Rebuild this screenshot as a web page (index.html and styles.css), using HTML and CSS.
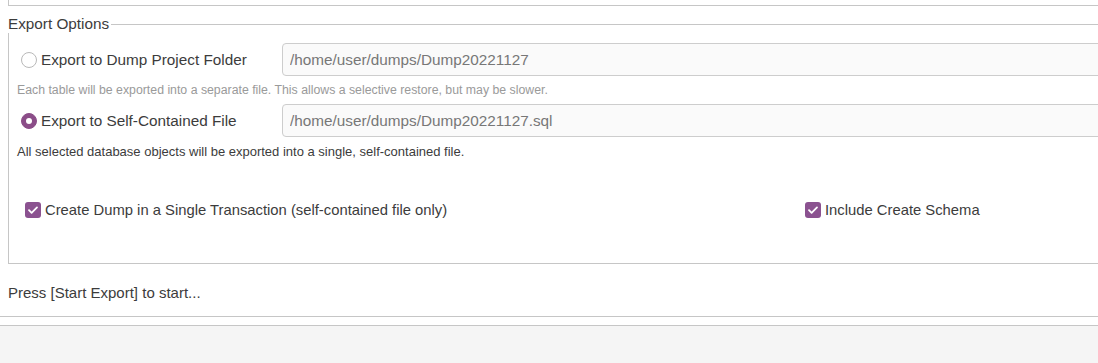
FILE: index.html
```html
<!DOCTYPE html>
<html lang="en">
<head>
    <meta charset="UTF-8">
    <title>Export Options</title>
    <link rel="stylesheet" href="styles.css">
</head>
<body>
    <div class="page">
        <div class="top-box"></div>

        <div class="frame-head">
            <span class="frame-title">Export Options</span>
            <span class="frame-rule"></span>
        </div>
        <div class="frame-body">
            <div class="option-row">
                <label class="radio"><span class="radio-dot"></span>Export to Dump Project Folder</label>
                <input class="path" type="text" value="/home/user/dumps/Dump20221127">
            </div>
            <p class="hint muted">Each table will be exported into a separate file. This allows a selective restore, but may be slower.</p>
            <div class="option-row">
                <label class="radio"><span class="radio-dot checked"></span>Export to Self-Contained File</label>
                <input class="path" type="text" value="/home/user/dumps/Dump20221127.sql">
            </div>
            <p class="hint wide">All selected database objects will be exported into a single, self-contained file.</p>

            <div class="check-row">
                <label class="check first"><span class="box"><svg viewBox="0 0 16 16" width="16" height="16"><path d="M4 8.2l2.6 2.6L12 5.4" fill="none" stroke="#fff" stroke-width="1.8" stroke-linecap="round" stroke-linejoin="round"/></svg></span>Create Dump in a Single Transaction (self-contained file only)</label>
                <label class="check"><span class="box"><svg viewBox="0 0 16 16" width="16" height="16"><path d="M4 8.2l2.6 2.6L12 5.4" fill="none" stroke="#fff" stroke-width="1.8" stroke-linecap="round" stroke-linejoin="round"/></svg></span>Include Create Schema</label>
            </div>
        </div>

        <p class="status">Press [Start Export] to start...</p>
        <div class="sep"></div>
    </div>
    <div class="footer"></div>
</body>
</html>
```

FILE: styles.css
```css
html, body {margin: 0; padding: 0; background: #ffffff; overflow: hidden;}
body {font-family: "Liberation Sans", "DejaVu Sans", sans-serif; color: #3c3c3c; font-size: 15px; width: 1098px; height: 363px;}
.page {width: 1130px; padding-left: 8px;}

.top-box {height: 5px; border: 1px solid #c6c6c6; border-top: 0;}

.frame-head {display: flex; align-items: center; height: 18px; margin-top: 9px;}
.frame-title {line-height: 18px; padding-right: 2px; font-size: 15.3px;}
.frame-rule {flex: 1; border-top: 1px solid #c6c6c6;}

.frame-body {border: 1px solid #c6c6c6; border-top: 0; padding: 10px 0 0 8px; height: 220px;}

.option-row {display: flex; align-items: center; height: 33px; margin-left: 4px;}
.radio {display: flex; align-items: center; width: 261px; line-height: 18px; font-size: 15.3px;}
.radio-dot {width: 14px; height: 14px; border: 1px solid #b9b9b9; border-radius: 50%; background: #fff; margin-right: 4px; box-sizing: content-box; position: relative;}
.radio-dot.checked {background: #8b4d88; border-color: #8b4d88;}
.radio-dot.checked::after {content: ""; position: absolute; left: 4px; top: 4px; width: 6px; height: 6px; border-radius: 50%; background: #fff;}

.path {flex: 1; height: 33px; box-sizing: border-box; border: 1px solid #cdcdcd; border-radius: 4px; background: #fafafa; padding: 0 7px; font: inherit; font-size: 15.3px; color: #777777; outline: none;}

.hint {margin: 6px 0 6px; font-size: 12.3px; line-height: 16px; color: #3c3c3c;}
.hint.muted {color: #9a9a9a;}
.hint.wide {font-size: 13px; margin-top: 7px;}

.check-row {display: flex; align-items: center; margin: 40px 0 0 8px; line-height: 20px; font-size: 14.8px;}
.check {display: flex; align-items: center;}
.check.first {width: 780px;}
.box {width: 16px; height: 16px; border-radius: 3px; background: #8b5290; margin-right: 4px; display: flex;}

.status {margin: 20px 0 0; line-height: 18px;}
.sep {height: 0; border-top: 1px solid #c6c6c6; margin-top: 14px; margin-left: -8px;}

.footer {height: 40px; background: #f5f5f5; border-top: 1px solid #c6c6c6; margin-top: 8px;}
```
